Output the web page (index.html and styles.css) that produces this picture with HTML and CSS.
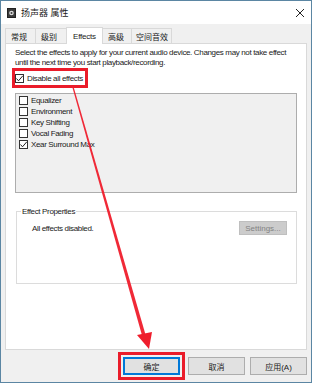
FILE: index.html
```html
<!DOCTYPE html>
<html lang="zh-CN">
<head>
<meta charset="UTF-8" />
<title>扬声器 属性</title>
<link rel="stylesheet" href="styles.css">
</head>
<body>
<div class="window">
  <div class="titlebar">
    <svg class="app-icon" width="9" height="10" viewBox="0 0 9 10">
      <rect x="0.5" y="0.5" width="8" height="9" fill="#3a3a3a" stroke="#222"/>
      <circle cx="4.5" cy="5" r="2.3" fill="#ddd"/>
      <circle cx="4.5" cy="5" r="1" fill="#3a3a3a"/>
    </svg>
    <span class="title">扬声器 属性</span>
    <span class="close">
      <svg width="10" height="10" viewBox="0 0 10 10"><path d="M1 1 L9 9 M9 1 L1 9" stroke="#222" stroke-width="1"/></svg>
    </span>
  </div>

  <div class="body">
    <div class="tabs">
      <div class="tab">常规</div>
      <div class="tab">级别</div>
      <div class="tab active">Effects</div>
      <div class="tab">高级</div>
      <div class="tab">空间音效</div>
    </div>

    <div class="panel">
      <p class="desc">Select the effects to apply for your current audio device. Changes may not take effect<br>until the next time you start playback/recording.</p>

      <div class="highlight">
        <label class="check"><span class="box checked"><svg width="9" height="9" viewBox="0 0 9 9"><path d="M1.5 4.5 L3.5 6.8 L7.8 1.8" fill="none" stroke="#222" stroke-width="1"/></svg></span>Disable all effects</label>
      </div>

      <div class="listbox">
        <label class="check"><span class="box"></span>Equalizer</label>
        <label class="check"><span class="box"></span>Environment</label>
        <label class="check"><span class="box"></span>Key Shifting</label>
        <label class="check"><span class="box"></span>Vocal Fading</label>
        <label class="check"><span class="box checked"><svg width="9" height="9" viewBox="0 0 9 9"><path d="M1.5 4.5 L3.5 6.8 L7.8 1.8" fill="none" stroke="#222" stroke-width="1"/></svg></span>Xear Surround Max</label>
      </div>

      <fieldset class="group">
        <legend>Effect Properties</legend>
        <div class="group-row">
          <span>All effects disabled.</span>
          <button class="btn-settings" disabled>Settings...</button>
        </div>
      </fieldset>
    </div>

    <div class="footer">
      <div class="ok-mark"><button class="btn default">确定</button></div>
      <button class="btn">取消</button>
      <button class="btn">应用(A)</button>
    </div>
  </div>

  <!-- annotation arrow drawn over the dialog -->
  <svg class="arrow" width="312" height="383" viewBox="0 0 312 383">
    <polygon points="72,86 73.2,85.6 146.5,338 143,339" fill="#ef1d2c" opacity="0.95"/>
    <polygon points="137,335 152,332 149,349" fill="#ef1d2c"/>
  </svg>
</div>
</body>
</html>
```

FILE: styles.css
```css
* {
  box-sizing: border-box;
}
body {
  margin: 0;
  font-family: 'Liberation Sans', 'Noto Sans CJK SC', sans-serif;
  font-size: 8px;
  letter-spacing: -0.35px;
  color: #1a1a1a;
}
.window {
  position: relative;
  width: 312px;
  height: 383px;
  border: 1px solid #5b86a3;
  display: flex;
  flex-direction: column;
  background: #f0f0f0;
}
.titlebar {
  height: 23px;
  background: #fff;
  display: flex;
  align-items: center;
  padding: 0 6px;
}
.app-icon {
  margin-right: 5px;
}
.title {
  font-size: 9px;
  letter-spacing: 0;
  flex: 1;
}
.close {
  display: flex;
}

.body {
  flex: 1;
  display: flex;
  flex-direction: column;
  padding: 2px 4px 0 4px;
}
.tabs {
  display: flex;
  align-items: flex-end;
  height: 17px;
  letter-spacing: 0;
}
.tab {
  height: 15px;
  border: 1px solid #d9d9d9;
  border-bottom: none;
  margin-right: -1px;
  padding: 0 5px;
  display: flex;
  align-items: center;
  white-space: nowrap;
  background: #f0f0f0;
}
.tab:nth-child(1) { width: 31px; }
.tab:nth-child(2) { width: 34px; }
.tab:nth-child(4) { width: 30px; }
.tab:nth-child(5) { width: 41px; padding: 0 4px; }
.tab.active {
  height: 17px;
  background: #fff;
  width: 37px;
  margin: 0 -1px -1px -2px;
  position: relative;
  z-index: 1;
  padding: 0 6px;
  letter-spacing: -0.2px;
}

.panel {
  height: 307px;
  background: #fff;
  border: 1px solid #d9d9d9;
  padding: 4px 9px 0 9px;
}
.desc {
  margin: 0;
  line-height: 10px;
  white-space: nowrap;
}
.highlight {
  display: inline-flex;
  border: 3px solid #ea1c2a;
  margin: 0 0 0 -3px;
  padding: 1px 2px 1px 0;
}
.check {
  display: flex;
  align-items: center;
  height: 11px;
  white-space: nowrap;
}
.highlight .check {
  height: 12px;
}
.box {
  width: 9px;
  height: 9px;
  border: 1px solid #333;
  background: #fff;
  margin-right: 3px;
  display: flex;
  align-items: center;
  justify-content: center;
}
.box svg {
  flex: none;
}
.listbox {
  margin-top: 5px;
  width: 282px;
  height: 100px;
  border: 1px solid #adadad;
  background: #f0f0f0;
  padding: 1px 3px;
}
.group {
  margin: 14px 0 0 1px;
  width: 281px;
  height: 77px;
  border: 1px solid #dcdcdc;
  padding: 0 0 0 15px;
}
.group legend {
  padding: 0 1px;
  margin-left: -11px;
}
.group-row {
  display: flex;
  align-items: center;
  justify-content: space-between;
  padding-right: 9px;
  margin-top: 5px;
}
.btn-settings {
  font: inherit;
  width: 48px;
  height: 14px;
  padding: 0;
  background: #cccccc;
  border: 1px solid #bfbfbf;
  color: #838383;
}

.footer {
  display: flex;
  justify-content: flex-end;
  align-items: center;
  gap: 5px;
  padding: 2px 0 0 0;
}
.ok-mark {
  border: 3px solid #ea1c2a;
  padding: 2px;
  margin-right: -2px;
}
.btn {
  font: inherit;
  letter-spacing: 0;
  width: 57px;
  height: 18px;
  padding: 0;
  background: #e1e1e1;
  border: 1px solid #adadad;
  color: #1a1a1a;
}
.btn.default {
  border: 2px solid #0078d7;
}

.arrow {
  position: absolute;
  left: -1px;
  top: -1px;
  pointer-events: none;
}
```
